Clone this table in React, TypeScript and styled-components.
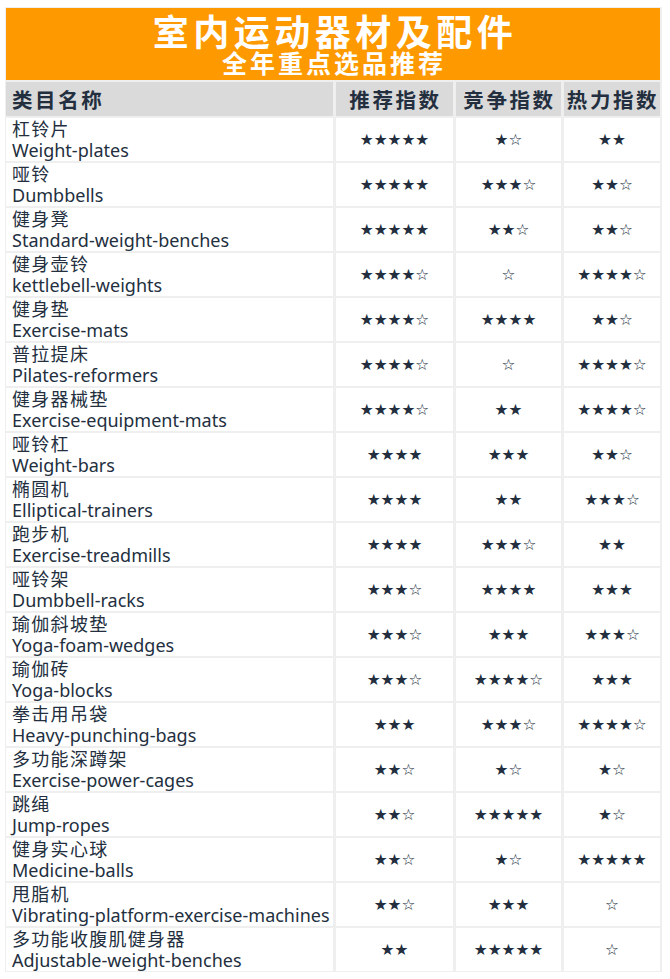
import React from "react";
import styled, { createGlobalStyle } from "styled-components";

const GlobalStyle = createGlobalStyle`
  html, body { margin: 0; padding: 0; background: #ffffff; }
  body { font-family: "Noto Sans", "Noto Sans CJK SC", sans-serif; }
`;

const Table = styled.div`
  margin: 7px 0 0 5px;
  width: 655px;
  padding: 1px;
  background: #efefef;
  display: grid;
  grid-template-columns: 327px 117px 105px 96px;
  column-gap: 3px;
  row-gap: 2px;
`;

const TitleCell = styled.div`
  grid-column: 1 / -1;
  height: 72px;
  background: #ff9900;
  color: #ffffff;
  display: flex;
  flex-direction: column;
  align-items: center;
  justify-content: center;
  font-family: "Noto Sans CJK SC", sans-serif;
  font-weight: 700;
`;

const Title = styled.div`
  font-size: 36px;
  line-height: 38px;
  letter-spacing: 4.5px;
  margin-left: 4px;
  margin-top: -2px;
`;

const Subtitle = styled.div`
  font-size: 25px;
  line-height: 27px;
  letter-spacing: 3px;
  margin-left: 2px;
`;

const HeadCell = styled.div<{ $left?: boolean }>`
  height: 34px;
  background: #dadada;
  color: #232f3e;
  display: flex;
  align-items: center;
  justify-content: ${(p) => (p.$left ? "flex-start" : "center")};
  padding-left: ${(p) => (p.$left ? "6px" : "2px")};
  font-family: "Noto Sans CJK SC", sans-serif;
  font-weight: 700;
  font-size: 20.5px;
  letter-spacing: 2.6px;
  white-space: nowrap;
  overflow: hidden;
`;

const NameCell = styled.div`
  height: 43px;
  background: #ffffff;
  padding-left: 6px;
  display: flex;
  flex-direction: column;
  justify-content: center;
  color: #232f3e;
  font-family: "Noto Sans", "Noto Sans CJK SC", sans-serif;
  font-size: 18px;
  line-height: 21px;
  white-space: nowrap;
`;

const CnName = styled.div`
  letter-spacing: 1.3px;
`;

const EnName = styled.div``;

const StarCell = styled.div`
  height: 43px;
  background: #ffffff;
  display: flex;
  align-items: center;
  justify-content: center;
  color: #232f3e;
  font-family: "DejaVu Sans", sans-serif;
  font-size: 15.5px;
`;

type Row = [string, string, string, string, string];

const rows: Row[] = [
  ["杠铃片", "Weight-plates", "★★★★★", "★☆", "★★"],
  ["哑铃", "Dumbbells", "★★★★★", "★★★☆", "★★☆"],
  ["健身凳", "Standard-weight-benches", "★★★★★", "★★☆", "★★☆"],
  ["健身壶铃", "kettlebell-weights", "★★★★☆", "☆", "★★★★☆"],
  ["健身垫", "Exercise-mats", "★★★★☆", "★★★★", "★★☆"],
  ["普拉提床", "Pilates-reformers", "★★★★☆", "☆", "★★★★☆"],
  ["健身器械垫", "Exercise-equipment-mats", "★★★★☆", "★★", "★★★★☆"],
  ["哑铃杠", "Weight-bars", "★★★★", "★★★", "★★☆"],
  ["椭圆机", "Elliptical-trainers", "★★★★", "★★", "★★★☆"],
  ["跑步机", "Exercise-treadmills", "★★★★", "★★★☆", "★★"],
  ["哑铃架", "Dumbbell-racks", "★★★☆", "★★★★", "★★★"],
  ["瑜伽斜坡垫", "Yoga-foam-wedges", "★★★☆", "★★★", "★★★☆"],
  ["瑜伽砖", "Yoga-blocks", "★★★☆", "★★★★☆", "★★★"],
  ["拳击用吊袋", "Heavy-punching-bags", "★★★", "★★★☆", "★★★★☆"],
  ["多功能深蹲架", "Exercise-power-cages", "★★☆", "★☆", "★☆"],
  ["跳绳", "Jump-ropes", "★★☆", "★★★★★", "★☆"],
  ["健身实心球", "Medicine-balls", "★★☆", "★☆", "★★★★★"],
  ["甩脂机", "Vibrating-platform-exercise-machines", "★★☆", "★★★", "☆"],
  ["多功能收腹肌健身器", "Adjustable-weight-benches", "★★", "★★★★★", "☆"],
];

export default function App() {
  return (
    <>
      <GlobalStyle />
      <Table>
        <TitleCell>
          <Title>室内运动器材及配件</Title>
          <Subtitle>全年重点选品推荐</Subtitle>
        </TitleCell>
        <HeadCell $left>类目名称</HeadCell>
        <HeadCell>推荐指数</HeadCell>
        <HeadCell>竞争指数</HeadCell>
        <HeadCell>热力指数</HeadCell>
        {rows.map((r) => (
          <React.Fragment key={r[1]}>
            <NameCell>
              <CnName>{r[0]}</CnName>
              <EnName>{r[1]}</EnName>
            </NameCell>
            <StarCell>{r[2]}</StarCell>
            <StarCell>{r[3]}</StarCell>
            <StarCell>{r[4]}</StarCell>
          </React.Fragment>
        ))}
      </Table>
    </>
  );
}
